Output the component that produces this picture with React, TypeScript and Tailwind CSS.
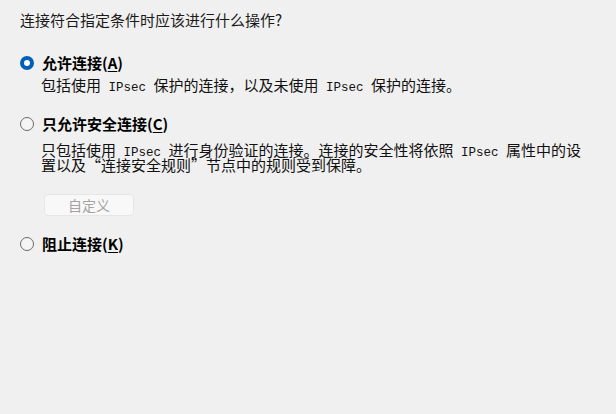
export default function App() {
  const cjk = { fontFamily: '"Noto Sans CJK SC", "Noto Sans", sans-serif' }

  const Ip = () => (
    <span className="font-['Liberation_Mono',monospace] text-[12.5px] leading-[10px]"> IPsec </span>
  )

  const Radio = ({ checked }: { checked?: boolean }) =>
    checked ? (
      <span className="w-[14px] h-[14px] rounded-full bg-[#005fb8] flex items-center justify-center shrink-0">
        <span className="w-[6px] h-[6px] rounded-full bg-white" />
      </span>
    ) : (
      <span className="w-[14px] h-[14px] rounded-full border border-[#6b6b6b] bg-[#f4f4f4] shrink-0" />
    )

  return (
    <div className="w-[616px] h-[414px] bg-[#f0f0f0] text-black overflow-hidden" style={cjk}>
      <div className="pl-[20px] pt-[10px]">
        <p className="text-[15px] leading-[20px] text-[#1a1a1a]">连接符合指定条件时应该进行什么操作?</p>

        <div className="mt-[23px] flex items-center gap-[8px] h-[20px]">
          <Radio checked />
          <span className="text-[15px] font-bold leading-[20px]">
            允许连接(<span className="underline underline-offset-2">A</span>)
          </span>
        </div>
        <p className="ml-[21px] mt-[2px] text-[15px] leading-[20px] text-[#111]">
          包括使用<Ip />保护的连接，以及未使用<Ip />保护的连接。
        </p>

        <div className="mt-[19px] flex items-center gap-[8px] h-[20px]">
          <Radio />
          <span className="text-[15px] font-bold leading-[20px]">
            只允许安全连接(<span className="underline underline-offset-2">C</span>)
          </span>
        </div>
        <p className="ml-[21px] mt-[9px] w-[550px] text-[15px] leading-[13px] text-[#111]">
          只包括使用<Ip />进行身份验证的连接。连接的安全性将依照<Ip />属性中的设置以及“连接安全规则”节点中的规则受到保障。
        </p>

        <div className="ml-[24px] mt-[23px] w-[90px] h-[22px] rounded-[4px] border border-[#e6e6e6] bg-[#f8f8f8] flex items-center justify-center text-[14px] text-[#a3a3a3]">
          自定义
        </div>

        <div className="mt-[18px] flex items-center gap-[8px] h-[20px]">
          <Radio />
          <span className="text-[15px] font-bold leading-[20px]">
            阻止连接(<span className="underline underline-offset-2">K</span>)
          </span>
        </div>
      </div>
    </div>
  )
}
